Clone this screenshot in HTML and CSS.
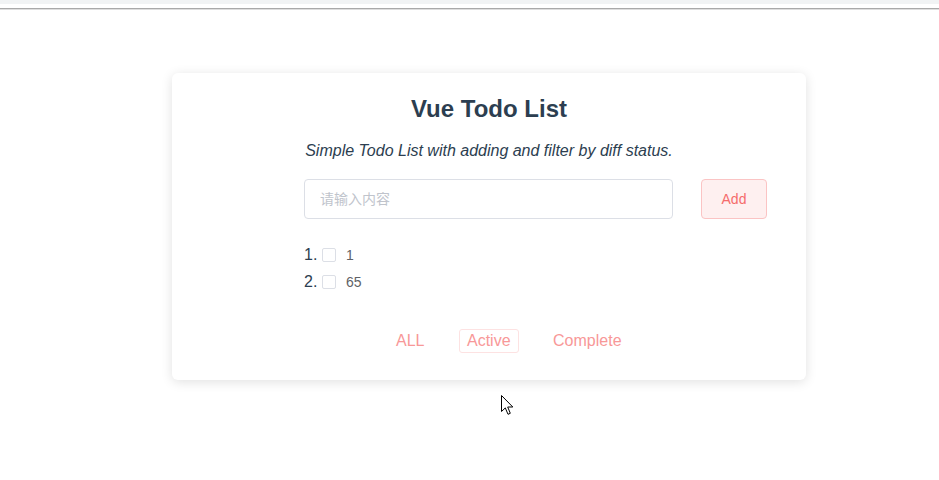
FILE: index.html
```html
<!DOCTYPE html>
<html lang="zh">
<head>
<meta charset="utf-8">
<title>Vue Todo List</title>
<link rel="stylesheet" href="styles.css">
</head>
<body>
<div class="topbar"></div>
<div class="topline"></div>
<main class="page">
  <section class="card">
    <h1 class="title">Vue Todo List</h1>
    <p class="subtitle">Simple Todo List with adding and filter by diff status.</p>
    <div class="add-row">
      <input class="todo-input" type="text" placeholder="请输入内容">
      <button class="add-btn" type="button">Add</button>
    </div>
    <ol class="todo-list">
      <li class="todo-item"><span class="num">1.</span><span class="checkbox"></span><span class="label">1</span></li>
      <li class="todo-item"><span class="num">2.</span><span class="checkbox"></span><span class="label">65</span></li>
    </ol>
    <div class="filters">
      <button class="filter" type="button">ALL</button>
      <button class="filter active" type="button">Active</button>
      <button class="filter" type="button">Complete</button>
    </div>
  </section>
</main>
<svg class="cursor" width="13" height="21" viewBox="0 0 13 21" xmlns="http://www.w3.org/2000/svg">
  <path d="M0.5 0.5 L0.5 16.5 L4.3 12.9 L7 19.3 L9.3 18.3 L6.7 12 L11.8 12 Z" fill="#fff" stroke="#000" stroke-width="1" stroke-linejoin="miter"/>
</svg>
</body>
</html>
```

FILE: styles.css
```css
* { box-sizing: border-box; }
html, body { margin: 0; padding: 0; background: #fff; }
body {
  font-family: "Liberation Sans", Arial, "Noto Sans CJK SC", sans-serif;
  color: #2c3e50;
  width: 939px;
  height: 480px;
  overflow: hidden;
  position: relative;
}
.topbar { height: 4px; background: #f1f3f4; }
.topline { height: 1px; margin-top: 4px; background: #a9a9a9; box-shadow: 0 1px 0 #dedede; }
.page { padding-top: 64px; }
.card {
  margin-left: 172px;
  width: 634px;
  height: 307px;
  background: #fff;
  border-radius: 6px;
  box-shadow: 0 2px 12px 0 rgba(0, 0, 0, 0.12);
  padding-top: 22px;
}
.title {
  margin: 0;
  text-align: center;
  font-size: 24px;
  font-weight: bold;
  line-height: 28px;
  color: #2c3e50;
}
.subtitle {
  margin: 19px 0 0;
  text-align: center;
  font-size: 16px;
  font-style: italic;
  line-height: 18px;
  color: #2c3e50;
}
.add-row {
  display: flex;
  margin: 19px 0 0 132px;
}
.todo-input {
  width: 369px;
  height: 40px;
  border: 1px solid #dcdfe6;
  border-radius: 4px;
  padding: 0 15px;
  font-family: "Liberation Sans", Arial, "Noto Sans CJK SC", sans-serif;
  font-size: 14px;
  color: #606266;
  outline: none;
}
.todo-input::placeholder { color: #c0c4cc; }
.add-btn {
  margin-left: 28px;
  width: 66px;
  height: 40px;
  padding: 0;
  border: 1px solid #fbc4c4;
  border-radius: 4px;
  background: #fef0f0;
  color: #f56c6c;
  font-family: "Liberation Sans", Arial, sans-serif;
  font-size: 14px;
  line-height: 1;
}
.todo-list {
  list-style: none;
  margin: 22px 0 0 132px;
  padding: 0;
}
.todo-item {
  display: flex;
  align-items: center;
  height: 27px;
}
.num {
  width: 18px;
  font-size: 16px;
  color: #2c3e50;
}
.checkbox {
  width: 14px;
  height: 14px;
  border: 1px solid #dcdfe6;
  border-radius: 2px;
  background: #fff;
}
.label {
  margin-left: 10px;
  font-size: 14px;
  color: #606266;
}
.filters {
  display: flex;
  gap: 26.5px;
  margin: 34px 0 0 216px;
}
.filter {
  height: 24px;
  padding: 0 7px;
  border: 1px solid transparent;
  border-radius: 3px;
  background: transparent;
  color: #f89898;
  font-family: "Liberation Sans", Arial, sans-serif;
  font-size: 16px;
  line-height: 22px;
}
.filter.active { border-color: #fde2e2; }
.cursor {
  position: absolute;
  left: 501px;
  top: 395px;
}
```
